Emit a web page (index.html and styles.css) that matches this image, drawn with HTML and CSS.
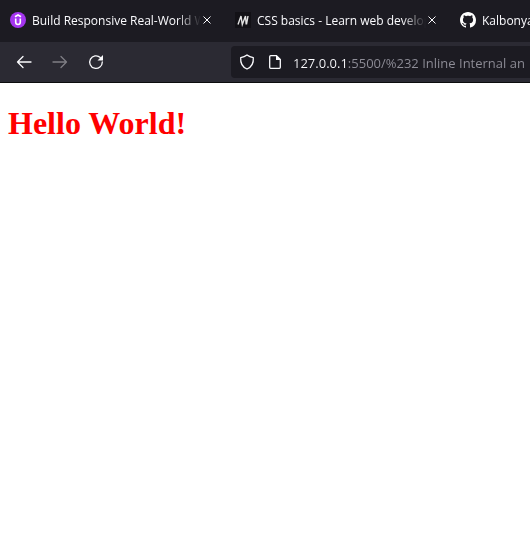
FILE: index.html
```
<!DOCTYPE html>
<html lang="en">
<head>
<meta charset="utf-8">
<title>Hello World</title>
<link rel="stylesheet" href="styles.css">
</head>
<body>
<header class="browser">
  <nav class="tabs" aria-label="Tabs">
    <div class="tab">
      <svg class="favicon" viewBox="0 0 16 16" aria-hidden="true"><circle cx="8" cy="8" r="8" fill="#a435f0"/><path d="M5 4.800 8 3l3 1.800M5.700 6.500v3.800c0 3 4.600 3 4.600 0V6.500" fill="none" stroke="#fff" stroke-width="1.600"/></svg>
      <a class="title" href="#">Build Responsive Real-World We</a>
      <button class="close" aria-label="Close tab"><svg viewBox="0 0 8 8"><path d="M.5.5l7 7M7.500.5l-7 7"/></svg></button>
    </div>
    <div class="tab">
      <svg class="favicon" viewBox="0 0 16 16" aria-hidden="true"><rect width="16" height="16" fill="#121116"/><path d="M3 12.500 6 4l1.300 8.500L10.500 4l.7 8.500M13 4l-1.500 8.500" fill="none" stroke="#e4e4e4" stroke-width="1.400"/></svg>
      <a class="title" href="#">CSS basics - Learn web develop</a>
      <button class="close" aria-label="Close tab"><svg viewBox="0 0 8 8"><path d="M.5.5l7 7M7.500.5l-7 7"/></svg></button>
    </div>
    <div class="tab">
      <svg class="favicon" viewBox="0 0 16 16" aria-hidden="true"><path fill="#fff" d="M8 0C3.58 0 0 3.58 0 8c0 3.54 2.290 6.530 5.470 7.590.4.070.550-.170.550-.380 0-.190-.010-.820-.010-1.490-2.010.370-2.530-.490-2.690-.940-.090-.230-.480-.940-.820-1.130-.280-.150-.680-.520-.010-.530.630-.010 1.080.580 1.230.820.720 1.210 1.870.870 2.330.660.070-.520.280-.870.510-1.070-1.780-.2-3.640-.890-3.640-3.950 0-.870.310-1.590.820-2.150-.080-.2-.360-1.020.080-2.120 0 0 .670-.210 2.200.820.640-.180 1.320-.270 2-.270s1.360.090 2 .270c1.530-1.040 2.200-.820 2.200-.820.440 1.100.160 1.920.080 2.120.510.560.820 1.270.820 2.150 0 3.070-1.870 3.750-3.650 3.950.290.250.540.730.540 1.480 0 1.070-.010 1.930-.010 2.200 0 .210.150.460.550.380A8.010 8.010 0 0 0 16 8c0-4.420-3.580-8-8-8z"/></svg>
      <a class="title" href="#">Kalbonya</a>
    </div>
  </nav>
  <div class="toolbar">
    <div class="controls">
      <button class="tool" aria-label="Back"><svg viewBox="0 0 16 16"><path d="M15 8H1.500M7 2.500 1.500 8 7 13.500"/></svg></button>
      <button class="tool" aria-label="Forward" disabled><svg viewBox="0 0 16 16"><path d="M1 8h13.500M9 2.500 14.500 8 9 13.500"/></svg></button>
      <button class="tool" aria-label="Reload"><svg viewBox="0 0 16 16"><path d="M12.300 3.500A6.300 6.300 0 1 0 14.300 8"/><path class="solid" d="M15 1v5.500H9.500z"/></svg></button>
    </div>
    <div class="address">
      <svg viewBox="0 0 16 16" aria-hidden="true"><path d="M8 1c2 1.600 4 2.300 6.300 2.700.4 5-1.800 9.300-6.300 11.300-4.500-2-6.700-6.300-6.300-11.300C4 3.300 6 2.600 8 1z"/></svg>
      <svg viewBox="0 0 16 16" aria-hidden="true"><path d="M9.500 1.700H3.700c-.7 0-1 .4-1 1v10.600c0 .7.300 1 1 1h8.600c.7 0 1-.3 1-1V5.500z"/><path class="solid" d="M9 1v5h5z"/></svg>
      <input class="url" type="text" aria-label="Address" value="127.0.0.1:5500/%232 Inline Internal an">
    </div>
  </div>
</header>
<main class="page">
  <h1>Hello World!</h1>
</main>
</body>
</html>
```
FILE: styles.css
```
* { box-sizing: border-box; }
body { margin: 0; background: #fff; overflow-x: hidden; }
button { padding: 0; border: 0; background: none; display: grid; place-items: center; }
svg { display: block; }
.browser { font-family: "Open Sans", "Noto Sans", sans-serif; color: #fbfbfe; border-bottom: 1px solid #0c0c0d; overflow: hidden; }
.tabs { display: flex; height: 42px; padding-left: 2px; background: #1c1b22; }
.tab { flex: none; display: flex; align-items: center; width: 225px; height: 40px; padding: 0 14px 0 8px; }
.favicon { flex: none; width: 16px; height: 16px; margin-right: 6px; }
.title { flex: 1; min-width: 0; overflow: hidden; white-space: nowrap; padding-top: 2px; font-size: 12px; line-height: 20px; color: #fbfbfe; text-decoration: none; -webkit-mask-image: linear-gradient(to left, transparent, #000 24px); mask-image: linear-gradient(to left, transparent, #000 24px); }
.close { flex: none; width: 12px; height: 20px; }
.close svg { width: 8px; height: 8px; fill: none; stroke: #fbfbfe; stroke-width: 1; }
.toolbar { display: flex; align-items: center; height: 40px; padding-left: 8px; background: #2b2a33; }
.controls { display: flex; flex: none; gap: 4px; width: 223px; }
.tool { width: 32px; height: 32px; }
.tool svg { width: 16px; height: 16px; }
.tool:disabled { opacity: .4; }
.tool path, .address path { fill: none; stroke: #fbfbfe; stroke-width: 1.3; stroke-linecap: round; stroke-linejoin: round; }
.tool .solid, .address .solid { fill: #fbfbfe; stroke: none; }
.address { flex: 1; display: flex; align-items: center; height: 32px; padding-left: 8px; gap: 12px; border-radius: 4px 0 0 4px; background: #1c1b22; min-width: 0; }
.address svg { flex: none; width: 16px; height: 16px; }
.url { flex: 1; min-width: 0; height: 26px; margin-left: -2px; padding: 2px 0 0; border: 0; outline: 0; font: 13px/24px "Open Sans", "Noto Sans", sans-serif; color: transparent; background: linear-gradient(to right, #fbfbfe 55px, #8f8e98 55px); -webkit-background-clip: text; background-clip: text; }
.page { padding: 0 8px; }
h1 { margin: 22px 0; font: bold 32px/37px "Liberation Serif", serif; color: #f00; }
```
